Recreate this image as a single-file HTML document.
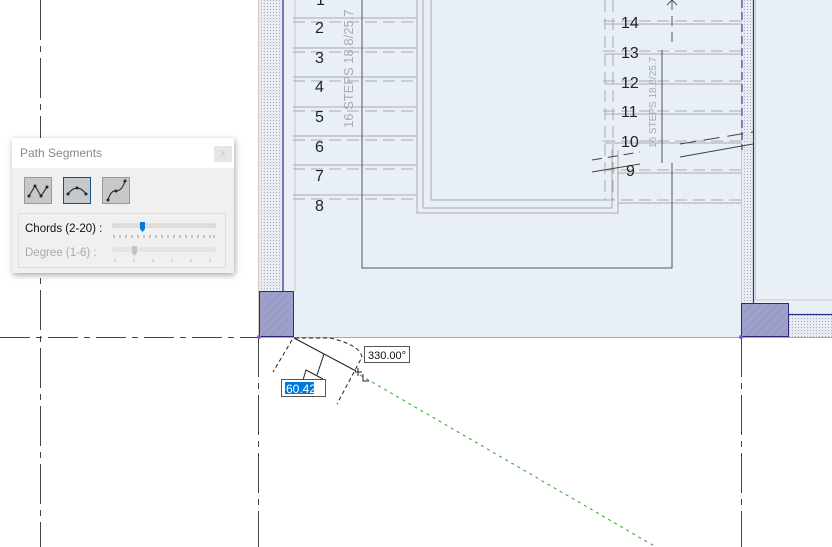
<!DOCTYPE html>
<html><head><meta charset="utf-8"><style>
html,body{margin:0;padding:0;background:#fff;width:832px;height:547px;overflow:hidden;font-family:"Liberation Sans",sans-serif}
svg{position:absolute;left:0;top:0}
.panel{position:absolute;left:12px;top:138px;width:222px;height:135px;background:#f0f0f0;box-shadow:1px 2px 6px rgba(0,0,0,.35);}
.title{height:30px;background:#fff;color:#888;font-size:12px;line-height:30px;padding-left:8px}
.close{position:absolute;right:2px;top:8px;width:18px;height:16px;background:#e6e6e6;color:#ccc;font-size:10px;text-align:center;line-height:16px}
.btn{position:absolute;top:39px;width:28px;height:27px;border:1px solid #999;background:#c8c8c8;box-sizing:border-box}
.grp{position:absolute;left:6px;top:75px;width:208px;height:55px;border:1px solid #ddd;box-sizing:border-box}
.lbl{position:absolute;font-size:11.5px}
</style></head><body>
<svg width="832" height="547" viewBox="0 0 832 547">
<defs>
<pattern id="st" width="3" height="3" patternUnits="userSpaceOnUse"><rect width="3" height="3" fill="#e8ecf2"/><rect width="1" height="1" fill="#a8b0c0"/></pattern>
<pattern id="hat" width="6" height="6" patternUnits="userSpaceOnUse" patternTransform="rotate(45)"><rect width="6" height="6" fill="#9c9cc8"/><line x1="0" y1="0" x2="0" y2="6" stroke="#b0b0d4" stroke-width="1"/></pattern>
</defs>
<rect x="258" y="0" width="574" height="337" fill="#e9eff6"/>
<rect x="259" y="0" width="23" height="291" fill="url(#st)"/>
<line x1="258.5" y1="0" x2="258.5" y2="337" stroke="#d8c8b8"/>
<line x1="283" y1="0" x2="283" y2="291" stroke="#2a2a8a" stroke-width="1.2"/>
<line x1="295" y1="0" x2="295" y2="291" stroke="#d8c8b8"/>
<rect x="259.5" y="291.5" width="34" height="45" fill="url(#hat)" stroke="#2a2a7a"/>
<rect x="742" y="0" width="11" height="303" fill="url(#st)"/>
<line x1="741.5" y1="0" x2="741.5" y2="303" stroke="#d8c8b8"/>
<line x1="742" y1="0" x2="742" y2="150" stroke="#2a2a8a" stroke-dasharray="8,4"/>
<line x1="753.5" y1="0" x2="753.5" y2="303" stroke="#2a2a8a" stroke-width="1.2"/>
<polyline points="755.5,0 755.5,300 788,300 832,300" fill="none" stroke="#d8c8b8"/>
<rect x="788" y="315" width="44" height="22" fill="url(#st)"/>
<line x1="788" y1="314.5" x2="832" y2="314.5" stroke="#2a2a8a" stroke-width="1.2"/>
<rect x="741.5" y="303.5" width="47" height="33" fill="url(#hat)" stroke="#2a2a7a"/>
<g stroke="#aaa" stroke-width="1">
<line x1="293" y1="18" x2="417" y2="18"/><line x1="293" y1="48" x2="417" y2="48"/><line x1="293" y1="77" x2="417" y2="77"/><line x1="293" y1="107" x2="417" y2="107"/><line x1="293" y1="136" x2="417" y2="136"/><line x1="293" y1="165" x2="417" y2="165"/><line x1="293" y1="195" x2="417" y2="195"/>
<line x1="605" y1="24" x2="741" y2="24"/><line x1="605" y1="54" x2="741" y2="54"/><line x1="605" y1="84" x2="741" y2="84"/><line x1="605" y1="114" x2="741" y2="114"/><line x1="605" y1="143" x2="741" y2="143"/><line x1="618" y1="173" x2="741" y2="173"/><line x1="618" y1="203" x2="741" y2="203"/>
</g>
<g stroke="#aaa" stroke-dasharray="12,6" stroke-width="1">
<line x1="293" y1="22" x2="417" y2="22"/><line x1="293" y1="52" x2="417" y2="52"/><line x1="293" y1="81" x2="417" y2="81"/><line x1="293" y1="111" x2="417" y2="111"/><line x1="293" y1="140" x2="417" y2="140"/><line x1="293" y1="169" x2="417" y2="169"/><line x1="293" y1="199" x2="417" y2="199"/>
<line x1="603" y1="21" x2="741" y2="21"/><line x1="603" y1="51" x2="741" y2="51"/><line x1="603" y1="81" x2="741" y2="81"/><line x1="603" y1="111" x2="741" y2="111"/><line x1="603" y1="141" x2="741" y2="141"/><line x1="603" y1="170" x2="741" y2="170"/><line x1="603" y1="200" x2="741" y2="200"/>
<line x1="605" y1="0" x2="605" y2="200"/><line x1="613" y1="0" x2="613" y2="200"/>
</g>
<g fill="none" stroke="#aaa">
<polyline points="417,0 417,213 618,213 618,150"/>
<polyline points="423,0 423,208 612,208 612,150"/>
<polyline points="431,0 431,200 605,200"/>
</g>
<polyline points="362,0 362,268 672,268 672,163" fill="none" stroke="#555"/>
<line x1="662" y1="50" x2="662" y2="163" stroke="#555"/>
<line x1="672" y1="0" x2="672" y2="48" stroke="#555" stroke-dasharray="10,6"/>
<polyline points="667,5 672,0 677,5" fill="none" stroke="#555"/>
<g stroke="#444" stroke-width="1">
<line x1="592" y1="160" x2="640" y2="152" stroke-dasharray="10,6"/><line x1="680" y1="144" x2="753" y2="132" stroke-dasharray="16,8"/>
<line x1="592" y1="172" x2="640" y2="164"/><line x1="680" y1="157" x2="753" y2="144"/>
</g>
<g font-family="Liberation Sans" font-size="16" fill="#222">
<text x="316" y="5">1</text><text x="315" y="33">2</text><text x="315" y="63">3</text><text x="315" y="92">4</text><text x="315" y="122">5</text><text x="315" y="152">6</text><text x="315" y="181">7</text><text x="315" y="211">8</text>
<text x="621" y="28">14</text><text x="621" y="58">13</text><text x="621" y="88">12</text><text x="621" y="117">11</text><text x="621" y="147">10</text><text x="626" y="176">9</text>
</g>
<text transform="translate(353,128) rotate(-90)" font-size="13" fill="#aaa" font-family="Liberation Sans">16 STEPS 18.8/25.7</text>
<text transform="translate(656,148) rotate(-90)" font-size="10" fill="#aaa" font-family="Liberation Sans">16 STEPS 18.8/25.7</text>
<line x1="0" y1="337.5" x2="258" y2="337.5" stroke="#444" stroke-dasharray="30,6,6,6"/>
<line x1="258" y1="337.5" x2="832" y2="337.5" stroke="#aaa"/>
<line x1="40.5" y1="0" x2="40.5" y2="547" stroke="#444" stroke-dasharray="40,6,6,6"/>
<line x1="258.5" y1="337" x2="258.5" y2="547" stroke="#444" stroke-dasharray="40,6,6,6"/>
<line x1="741.5" y1="337" x2="741.5" y2="547" stroke="#444" stroke-dasharray="40,6,6,6"/>
<circle cx="259" cy="337" r="2" fill="#8855cc"/><circle cx="741" cy="337" r="2" fill="#8855cc"/>
<line x1="294" y1="338" x2="356" y2="371" stroke="#222"/>
<polyline points="324,354 317,375" stroke="#222" fill="none"/>
<polyline points="303,380 306,370 323,379" stroke="#222" fill="none"/>
<path d="M292,340 L273,372 M295,338 L330,338 Q360,345 362,357 L337,404" fill="none" stroke="#222" stroke-dasharray="4,3"/>
<line x1="360" y1="375" x2="656" y2="547" stroke="#22aa22" stroke-dasharray="3,4"/>
<path d="M355,372 L362,372 M358,368 L358,376 M363,374 v7 h6" stroke="#222" fill="none"/>
<rect x="364.5" y="346.5" width="45" height="16" fill="#fff" stroke="#555"/>
<text x="368" y="359" font-size="11" fill="#111">330.00°</text>
<rect x="281.5" y="379.5" width="44" height="17" fill="#fff" stroke="#555"/>
<rect x="285" y="382" width="29" height="12" fill="#0078d7"/>
<text x="286" y="393" font-size="12" fill="#fff">60.42</text>
</svg>
<div class="panel">
<div class="title">Path Segments</div><div class="close">x</div>
<div class="btn" style="left:12px"><svg width="26" height="25"><polyline points="4,18 10,8 16,18 22,9" fill="none" stroke="#333" stroke-width="1.2"/><g fill="#222"><circle cx="4" cy="18" r="1.5"/><circle cx="10" cy="8" r="1.5"/><circle cx="16" cy="18" r="1.5"/><circle cx="22" cy="9" r="1.5"/></g></svg></div>
<div class="btn" style="left:51px;border-color:#1a4f8a;background:#c4c8cc"><svg width="26" height="25"><path d="M4,16 Q13,4 22,16" fill="none" stroke="#333" stroke-width="1.2"/><g fill="#222"><circle cx="4" cy="16" r="1.5"/><circle cx="13" cy="10" r="1.5"/><circle cx="22" cy="16" r="1.5"/></g></svg></div>
<div class="btn" style="left:90px"><svg width="26" height="25"><path d="M5,22 Q8,12 13,13 Q19,13 22,3" fill="none" stroke="#333" stroke-width="1.2"/><g fill="#222"><circle cx="5" cy="22" r="1.5"/><circle cx="13" cy="13" r="1.5"/><circle cx="22" cy="3" r="1.5"/></g></svg></div>
<div class="grp"></div>
<div class="lbl" style="left:13px;top:85px;color:#111">Chords (2-20) :</div>
<div class="lbl" style="left:13px;top:109px;color:#aaa">Degree (1-6) :</div>
<svg style="position:absolute;left:100px;top:84px" width="106" height="40">
<rect x="1" y="2" width="102" height="3" fill="#e4e4e4" stroke="#ccc"/>
<path d="M28,0 h5 v7 l-2.5,3 l-2.5,-3z" fill="#0a78d7"/>
<g stroke="#999"><line x1="2" y1="13" x2="2" y2="16"/><line x1="8" y1="13" x2="8" y2="16"/><line x1="14" y1="13" x2="14" y2="16"/><line x1="20" y1="13" x2="20" y2="16"/><line x1="26" y1="13" x2="26" y2="16"/><line x1="32" y1="13" x2="32" y2="16"/><line x1="38" y1="13" x2="38" y2="16"/><line x1="44" y1="13" x2="44" y2="16"/><line x1="50" y1="13" x2="50" y2="16"/><line x1="56" y1="13" x2="56" y2="16"/><line x1="62" y1="13" x2="62" y2="16"/><line x1="68" y1="13" x2="68" y2="16"/><line x1="74" y1="13" x2="74" y2="16"/><line x1="80" y1="13" x2="80" y2="16"/><line x1="86" y1="13" x2="86" y2="16"/><line x1="92" y1="13" x2="92" y2="16"/><line x1="98" y1="13" x2="98" y2="16"/><line x1="102" y1="13" x2="102" y2="16"/></g>
<rect x="1" y="26" width="102" height="3" fill="#e8e8e8" stroke="#ddd"/>
<path d="M20,24 h5 v7 l-2.5,3 l-2.5,-3z" fill="#c4c4c4"/>
<g stroke="#bbb"><line x1="3" y1="37" x2="3" y2="40"/><line x1="22" y1="37" x2="22" y2="40"/><line x1="41" y1="37" x2="41" y2="40"/><line x1="60" y1="37" x2="60" y2="40"/><line x1="79" y1="37" x2="79" y2="40"/><line x1="98" y1="37" x2="98" y2="40"/></g>
</svg>
</div>
</body></html>
